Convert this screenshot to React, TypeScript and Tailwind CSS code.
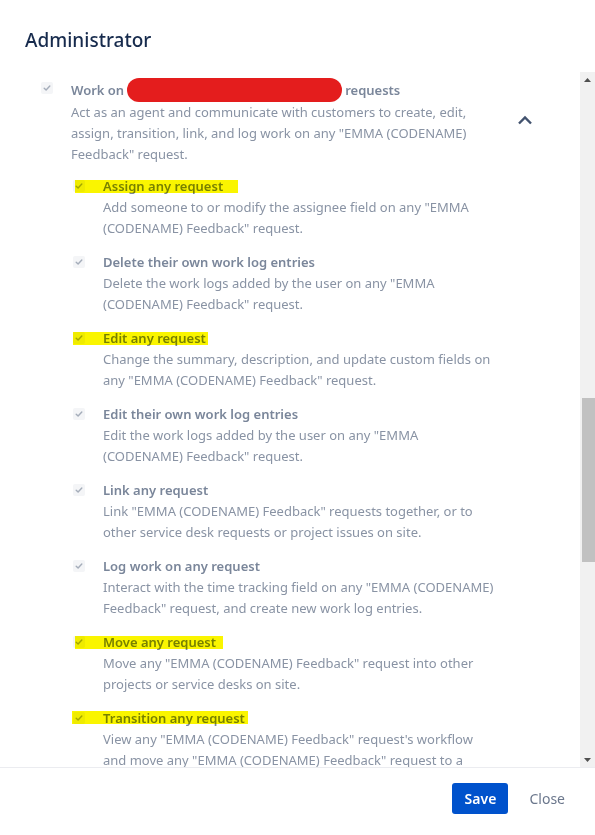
import React from 'react';

type Perm = {
  title: string;
  lines: string[];
  mark?: { left: number; top: number; width: number };
};

const perms: Perm[] = [
  {
    title: 'Assign any request',
    lines: ['Add someone to or modify the assignee field on any "EMMA', '(CODENAME) Feedback" request.'],
    mark: { left: 2, top: 4, width: 163 },
  },
  {
    title: 'Delete their own work log entries',
    lines: ['Delete the work logs added by the user on any "EMMA', '(CODENAME) Feedback" request.'],
  },
  {
    title: 'Edit any request',
    lines: ['Change the summary, description, and update custom fields on', 'any "EMMA (CODENAME) Feedback" request.'],
    mark: { left: 0, top: 4, width: 135 },
  },
  {
    title: 'Edit their own work log entries',
    lines: ['Edit the work logs added by the user on any "EMMA', '(CODENAME) Feedback" request.'],
  },
  {
    title: 'Link any request',
    lines: ['Link "EMMA (CODENAME) Feedback" requests together, or to', 'other service desk requests or project issues on site.'],
  },
  {
    title: 'Log work on any request',
    lines: ['Interact with the time tracking field on any "EMMA (CODENAME)', 'Feedback" request, and create new work log entries.'],
  },
  {
    title: 'Move any request',
    lines: ['Move any "EMMA (CODENAME) Feedback" request into other', 'projects or service desks on site.'],
    mark: { left: 2, top: 4, width: 148 },
  },
  {
    title: 'Transition any request',
    lines: ['View any "EMMA (CODENAME) Feedback" request\'s workflow', 'and move any "EMMA (CODENAME) Feedback" request to a'],
    mark: { left: -1, top: 3, width: 176 },
  },
];

function Check() {
  return (
    <div className="mt-[4px] flex h-[12px] w-[12px] shrink-0 items-center justify-center rounded-[2px] bg-[#F4F5F7]">
      <svg width="8" height="8" viewBox="0 0 8 8" fill="none">
        <path d="M1.2 4.2 L3.1 6 L6.8 2" stroke="#A5ADBA" strokeWidth="1.4" strokeLinecap="round" strokeLinejoin="round" />
      </svg>
    </div>
  );
}

export default function App() {
  return (
    <div
      className="flex h-[835px] w-[595px] flex-col overflow-hidden bg-white"
      style={{ fontFamily: '"Noto Sans", "Open Sans", sans-serif' }}
    >
      {/* Header */}
      <div className="h-[72px] shrink-0 px-[25px] pt-[27px]">
        <h1 className="text-[19px] leading-[26px] font-medium text-[#172B4D]">Administrator</h1>
      </div>

      {/* Scrolling body */}
      <div className="flex h-[696px] shrink-0 border-b border-[#EBECF0]">
        <div className="flex-1 overflow-hidden pl-[41px] pt-[6px]">
          <div className="flex items-center">
            <div className="flex">
              <Check />
              <div className="ml-[18px] w-[420px] text-[13px] leading-[21px]">
                <div className="flex items-center font-semibold text-[#7A869A]">
                  Work on
                  <span className="mx-[3px] inline-block h-[24px] w-[215px] rounded-full bg-[#E41D1D]" />
                  requests
                </div>
                <div className="text-[#8993A4]">
                  <div>Act as an agent and communicate with customers to create, edit,</div>
                  <div>assign, transition, link, and log work on any "EMMA (CODENAME)</div>
                  <div>Feedback" request.</div>
                </div>
              </div>
            </div>
            <svg className="ml-[26px] mt-[-4px]" width="16" height="10" viewBox="0 0 16 10" fill="none">
              <path d="M2 8.5 L8 2.5 L14 8.5" stroke="#42526E" strokeWidth="2.4" strokeLinejoin="miter" />
            </svg>
          </div>

          <div className="ml-[32px] mt-[11px] flex flex-col gap-[13px]">
            {perms.map((p) => (
              <div key={p.title} className="relative flex">
                <Check />
                <div className="ml-[18px] text-[13px] leading-[21px]">
                  <div className="font-semibold text-[#7A869A]">{p.title}</div>
                  <div className="text-[#8993A4]">
                    {p.lines.map((l) => (
                      <div key={l}>{l}</div>
                    ))}
                  </div>
                </div>
                {p.mark && (
                  <span
                    className="pointer-events-none absolute h-[13px] bg-[#FAF500] mix-blend-multiply"
                    style={{ left: p.mark.left, top: p.mark.top, width: p.mark.width }}
                  />
                )}
              </div>
            ))}
          </div>
        </div>

        {/* Scrollbar */}
        <div className="flex w-[15px] shrink-0 flex-col bg-[#F1F1F1]">
          <div className="flex h-[15px] items-center justify-center">
            <svg width="7" height="4" viewBox="0 0 7 4"><path d="M0 4 L3.5 0 L7 4 Z" fill="#505050" /></svg>
          </div>
          <div className="h-[311px]" />
          <div className="ml-[2px] h-[164px] bg-[#C1C1C1]" />
          <div className="flex-1" />
          <div className="flex h-[15px] items-center justify-center">
            <svg width="7" height="4" viewBox="0 0 7 4"><path d="M0 0 L7 0 L3.5 4 Z" fill="#505050" /></svg>
          </div>
        </div>
      </div>

      {/* Footer */}
      <div className="flex items-start justify-end pr-[30px] pt-[15px]">
        <button className="h-[31px] w-[56px] rounded-[3px] bg-[#0052CC] text-[14px] font-semibold text-white">Save</button>
        <button className="ml-[21px] h-[31px] text-[14px] text-[#6B778C]">Close</button>
      </div>
    </div>
  );
}
